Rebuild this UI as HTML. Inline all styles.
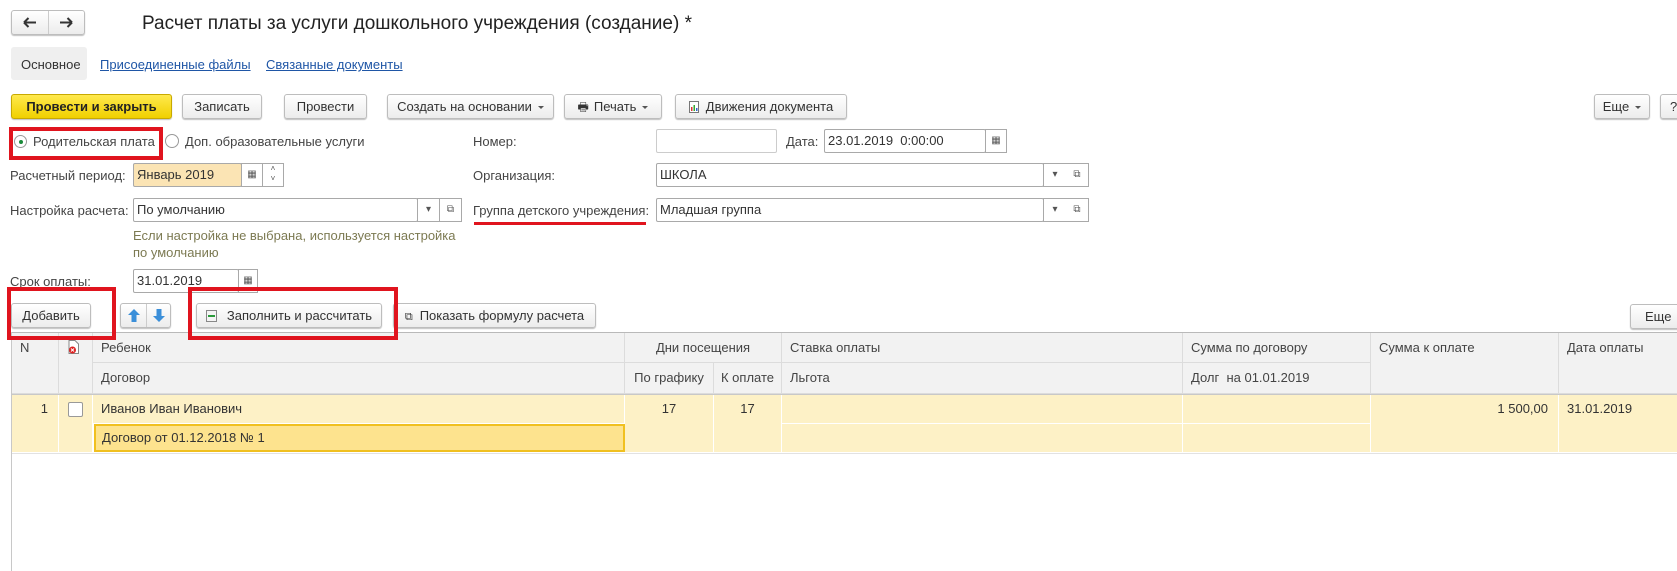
<!DOCTYPE html>
<html><head><meta charset="utf-8">
<style>
*{box-sizing:border-box;margin:0;padding:0}
body{width:1677px;height:571px;overflow:hidden;background:#fff;font-family:"Liberation Sans",Arial,sans-serif;font-size:13px;color:#333;position:relative}
.a{position:absolute;white-space:nowrap}
.btn{position:absolute;height:25px;border:1px solid #bdbdbd;border-radius:3px;background:linear-gradient(#fff,#ececec);box-shadow:0 1px 1px rgba(0,0,0,.25);text-align:center;line-height:23px;color:#333;white-space:nowrap}
.inp{position:absolute;height:24px;border:1px solid #a9a9a9;border-radius:2px;background:#fff;line-height:22px;padding-left:3px;white-space:nowrap}
.ib{position:absolute;height:24px;border:1px solid #a9a9a9;background:#fff;text-align:center;line-height:22px;font-size:10px;color:#555}
.red{position:absolute;border:4px solid #e0141e;z-index:10}
.lbl{position:absolute;color:#444;white-space:nowrap}
.th{position:absolute;background:#f2f2f2;border-right:1px solid #dcdcdc;border-bottom:1px solid #dcdcdc;padding-left:8px;line-height:30px;color:#444;white-space:nowrap}
.td{position:absolute;background:#fdf1c6;border-right:1px solid #fff;border-bottom:1px solid #fff;line-height:28px;white-space:nowrap;color:#333}
.caret{display:inline-block;width:0;height:0;border-left:3px solid transparent;border-right:3px solid transparent;border-top:3px solid #555;vertical-align:middle;margin-left:6px}
</style></head><body>

<!-- nav -->
<div class="a" style="left:11px;top:10px;width:74px;height:25px;border:1px solid #bdbdbd;border-radius:3px;background:linear-gradient(#fff,#ececec);box-shadow:0 1px 1px rgba(0,0,0,.25)">
<div style="position:absolute;left:36px;top:0;width:1px;height:23px;background:#ccc"></div>
<svg style="position:absolute;left:11px;top:6px" width="14" height="11"><path d="M1 5.5H13M1 5.5L5.5 1M1 5.5L5.5 10" stroke="#333" stroke-width="2" fill="none"/></svg>
<svg style="position:absolute;left:47px;top:6px" width="14" height="11"><path d="M1 5.5H13M13 5.5L8.5 1M13 5.5L8.5 10" stroke="#333" stroke-width="2" fill="none"/></svg>
</div>
<div class="a" style="left:142px;top:13px;font-size:19px;color:#222">Расчет платы за услуги дошкольного учреждения (создание) *</div>

<!-- tabs -->
<div class="a" style="left:11px;top:47px;width:76px;height:33px;background:#efefef;border-radius:3px"></div>
<div class="a" style="left:21px;top:57px;color:#333">Основное</div>
<div class="a" style="left:100px;top:57px;color:#1f56a6;text-decoration:underline">Присоединенные файлы</div>
<div class="a" style="left:266px;top:57px;color:#1f56a6;text-decoration:underline">Связанные документы</div>

<!-- toolbar -->
<div class="btn" style="left:11px;top:94px;width:161px;background:linear-gradient(#ffe94d,#f0d000);border-color:#c8a900;font-weight:bold;color:#222">Провести и закрыть</div>
<div class="btn" style="left:182px;top:94px;width:80px">Записать</div>
<div class="btn" style="left:284px;top:94px;width:83px">Провести</div>
<div class="btn" style="left:387px;top:94px;width:167px">Создать на основании<span class="caret"></span></div>
<div class="btn" style="left:564px;top:94px;width:98px"><span style="font-size:12px;margin-right:5px">&#x1F5B6;</span>Печать<span class="caret"></span></div>
<div class="btn" style="left:675px;top:94px;width:172px"><svg width="10" height="12" style="vertical-align:-2px;margin-right:7px"><rect x="0.5" y="0.5" width="9" height="11" fill="#fff" stroke="#777"/><rect x="2" y="6" width="1.5" height="4" fill="#d33"/><rect x="4.5" y="4" width="1.5" height="6" fill="#3a3"/><rect x="7" y="7" width="1.5" height="3" fill="#36c"/></svg>Движения документа</div>
<div class="btn" style="left:1594px;top:94px;width:56px">Еще<span class="caret"></span></div>
<div class="btn" style="left:1660px;top:94px;width:30px;text-align:left;padding-left:9px">?</div>

<!-- radios -->
<div class="red" style="left:9px;top:127px;width:154px;height:33px"></div>
<div class="a" style="left:14px;top:135px;width:13px;height:13px;border:1px solid #999;border-radius:50%;background:#fff"><div style="position:absolute;left:3.5px;top:3.5px;width:4px;height:4px;border-radius:50%;background:#1a8a3a"></div></div>
<div class="lbl" style="left:33px;top:134px">Родительская плата</div>
<div class="a" style="left:165px;top:134px;width:14px;height:14px;border:1px solid #999;border-radius:50%;background:#fff"></div>
<div class="lbl" style="left:185px;top:134px">Доп. образовательные услуги</div>

<div class="lbl" style="left:473px;top:134px">Номер:</div>
<div class="inp" style="left:656px;top:129px;width:121px;border-color:#ccc"></div>
<div class="lbl" style="left:786px;top:134px">Дата:</div>
<div class="inp" style="left:824px;top:129px;width:162px">23.01.2019&nbsp; 0:00:00</div>
<div class="ib" style="left:985px;top:129px;width:22px">&#x25A6;</div>

<!-- period -->
<div class="lbl" style="left:10px;top:168px">Расчетный период:</div>
<div class="inp" style="left:133px;top:163px;width:109px;background:#fbe4b4">Январь 2019</div>
<div class="ib" style="left:241px;top:163px;width:22px">&#x25A6;</div>
<div class="ib" style="left:262px;top:163px;width:22px;font-size:8px;line-height:10px">&#x2C4;<br>&#x2C5;</div>

<div class="lbl" style="left:473px;top:168px">Организация:</div>
<div class="inp" style="left:656px;top:163px;width:388px">ШКОЛА</div>
<div class="ib" style="left:1043px;top:163px;width:24px">&#x25BE;</div>
<div class="ib" style="left:1066px;top:163px;width:23px;border-left:none">&#x29C9;</div>

<!-- settings -->
<div class="lbl" style="left:10px;top:203px">Настройка расчета:</div>
<div class="inp" style="left:133px;top:198px;width:285px">По умолчанию</div>
<div class="ib" style="left:417px;top:198px;width:23px">&#x25BE;</div>
<div class="ib" style="left:440px;top:198px;width:22px;border-left:none">&#x29C9;</div>

<div class="lbl" style="left:473px;top:203px">Группа детского учреждения:</div>
<div class="a" style="left:474px;top:222px;width:172px;height:3px;background:#e0141e"></div>
<div class="inp" style="left:656px;top:198px;width:388px">Младшая группа</div>
<div class="ib" style="left:1043px;top:198px;width:24px">&#x25BE;</div>
<div class="ib" style="left:1066px;top:198px;width:23px;border-left:none">&#x29C9;</div>

<div class="a" style="left:133px;top:227px;color:#7c7a52;line-height:17px">Если настройка не выбрана, используется настройка<br>по умолчанию</div>

<!-- srok -->
<div class="lbl" style="left:10px;top:274px">Срок оплаты:</div>
<div class="inp" style="left:133px;top:269px;width:106px">31.01.2019</div>
<div class="ib" style="left:238px;top:269px;width:20px">&#x25A6;</div>

<!-- table toolbar -->
<div class="btn" style="left:11px;top:303px;width:80px">Добавить</div>
<div class="btn" style="left:120px;top:303px;width:51px"><span style="position:absolute;left:25px;top:0;width:1px;height:23px;background:#ccc"></span>
<svg style="position:absolute;left:7px;top:5px" width="12" height="13"><path d="M6 0L12 6H8.5V13H3.5V6H0Z" fill="#3b8fd9"/></svg>
<svg style="position:absolute;left:32px;top:5px" width="12" height="13"><path d="M6 13L12 7H8.5V0H3.5V7H0Z" fill="#3b8fd9"/></svg></div>
<div class="red" style="left:7px;top:287px;width:109px;height:53px"></div>
<div class="btn" style="left:196px;top:303px;width:186px"><svg width="11" height="12" style="vertical-align:-2px;margin-right:10px"><rect x="0.5" y="0.5" width="10" height="11" fill="#f4f4f4" stroke="#888"/><rect x="2" y="5" width="7" height="2" fill="#2a9a3a"/></svg>Заполнить и рассчитать</div>
<div class="red" style="left:188px;top:287px;width:210px;height:53px"></div>
<div class="btn" style="left:393px;top:303px;width:203px"><span style="font-size:11px;margin-right:7px">&#x29C9;</span>Показать формулу расчета</div>
<div class="btn" style="left:1630px;top:304px;width:60px;text-align:left;padding-left:14px">Еще</div>

<!-- table -->
<div class="a" style="left:11px;top:332px;width:1666px;height:1px;background:#b9b9b9"></div>
<div class="a" style="left:11px;top:332px;width:1px;height:239px;background:#c8c8c8"></div>

<div class="th" style="left:12px;top:333px;width:47px;height:61px;padding-left:8px">N</div>
<div class="th" style="left:59px;top:333px;width:34px;height:61px"><svg style="position:absolute;left:9px;top:7px" width="12" height="14"><path d="M1 .5H7L10.5 4V13.5H1Z" fill="#fff" stroke="#888"/><circle cx="4.5" cy="10" r="3.5" fill="#d22"/><path d="M3 8.5L6 11.5M6 8.5L3 11.5" stroke="#fff" stroke-width="1"/></svg></div>
<div class="th" style="left:93px;top:333px;width:532px;height:30px">Ребенок</div>
<div class="th" style="left:93px;top:363px;width:532px;height:31px">Договор</div>
<div class="th" style="left:625px;top:333px;width:157px;height:30px;padding:0;text-align:center">Дни посещения</div>
<div class="th" style="left:625px;top:363px;width:89px;height:31px;padding:0;text-align:center">По графику</div>
<div class="th" style="left:714px;top:363px;width:68px;height:31px;padding:0;text-align:center">К оплате</div>
<div class="th" style="left:782px;top:333px;width:401px;height:30px">Ставка оплаты</div>
<div class="th" style="left:782px;top:363px;width:401px;height:31px">Льгота</div>
<div class="th" style="left:1183px;top:333px;width:188px;height:30px">Сумма по договору</div>
<div class="th" style="left:1183px;top:363px;width:188px;height:31px">Долг&nbsp; на 01.01.2019</div>
<div class="th" style="left:1371px;top:333px;width:188px;height:61px">Сумма к оплате</div>
<div class="th" style="left:1559px;top:333px;width:130px;height:61px">Дата оплаты</div>
<div class="a" style="left:12px;top:394px;width:1665px;height:1px;background:#c8c8c8"></div>

<div class="td" style="left:12px;top:395px;width:47px;height:58px;text-align:right;padding-right:10px">1</div>
<div class="td" style="left:59px;top:395px;width:34px;height:58px"><div style="position:absolute;left:9px;top:7px;width:15px;height:15px;border:1px solid #999;border-radius:2px;background:#fff"></div></div>
<div class="td" style="left:93px;top:395px;width:532px;height:29px;padding-left:8px">Иванов Иван Иванович</div>
<div class="a" style="left:94px;top:424px;width:531px;height:28px;background:#fde38e;border:2px solid #f0c020;line-height:24px;padding-left:6px">Договор от 01.12.2018 № 1</div>
<div class="td" style="left:625px;top:395px;width:89px;height:58px;text-align:center">17</div>
<div class="td" style="left:714px;top:395px;width:68px;height:58px;text-align:center">17</div>
<div class="td" style="left:782px;top:395px;width:401px;height:29px"></div>
<div class="td" style="left:782px;top:424px;width:401px;height:29px"></div>
<div class="td" style="left:1183px;top:395px;width:188px;height:29px"></div>
<div class="td" style="left:1183px;top:424px;width:188px;height:29px"></div>
<div class="td" style="left:1371px;top:395px;width:188px;height:58px;text-align:right;padding-right:10px">1 500,00</div>
<div class="td" style="left:1559px;top:395px;width:130px;height:58px;padding-left:8px">31.01.2019</div>
<div class="a" style="left:12px;top:453px;width:1665px;height:1px;background:#e2e2e2"></div>

</body></html>
